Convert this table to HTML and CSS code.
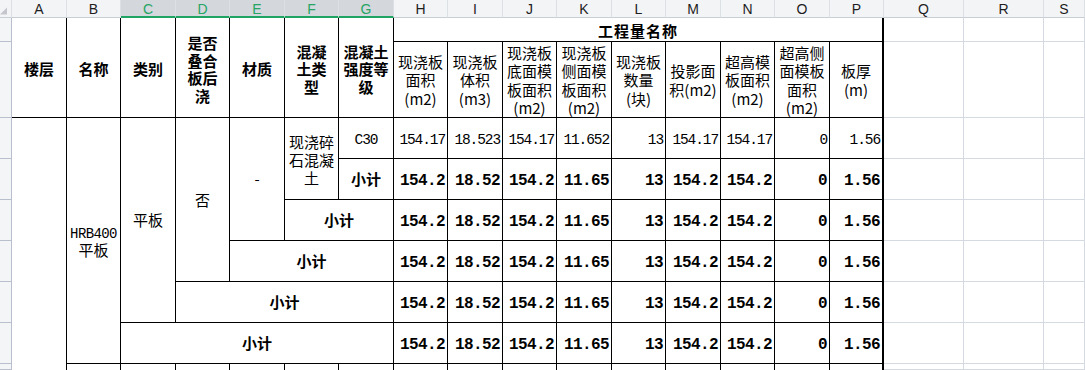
FILE: index.html
```html
<!DOCTYPE html>
<html lang="zh-CN">
<head>
<meta charset="utf-8">
<title>工程量表</title>
<link rel="stylesheet" href="styles.css">
</head>
<body>
<div class="sheet">
  <!-- column headers -->
  <div class="ch corner"><svg class="tri" width="8" height="8" viewBox="0 0 8 8"><polygon points="8,0 8,8 0,8" fill="#c3c7cd"/></svg></div>
  <div class="ch">A</div>
  <div class="ch">B</div>
  <div class="ch sel">C</div>
  <div class="ch sel">D</div>
  <div class="ch sel">E</div>
  <div class="ch sel">F</div>
  <div class="ch sel">G</div>
  <div class="ch">H</div>
  <div class="ch">I</div>
  <div class="ch">J</div>
  <div class="ch">K</div>
  <div class="ch">L</div>
  <div class="ch">M</div>
  <div class="ch">N</div>
  <div class="ch">O</div>
  <div class="ch">P</div>
  <div class="ch">Q</div>
  <div class="ch">R</div>
  <div class="ch">S</div>

  <!-- row 1 -->
  <div class="rh"></div>
  <div class="c hd r2"><span class="t">楼层</span></div>
  <div class="c hd r2"><span class="t">名称</span></div>
  <div class="c hd r2"><span class="t">类别</span></div>
  <div class="c hd r2"><span class="t">是否<br>叠合<br>板后<br>浇</span></div>
  <div class="c hd r2"><span class="t">材质</span></div>
  <div class="c hd r2"><span class="t">混凝<br>土类<br>型</span></div>
  <div class="c hd r2"><span class="t">混凝土<br>强度等<br>级</span></div>
  <div class="c title c9 p"><span class="t">工程量名称</span></div>
  <div class="e"></div><div class="e"></div><div class="e"></div>

  <!-- row 2 -->
  <div class="rh"></div>
  <div class="c sh"><span class="t">现浇板<br>面积<br>(m2)</span></div>
  <div class="c sh"><span class="t">现浇板<br>体积<br>(m3)</span></div>
  <div class="c sh"><span class="t">现浇板<br>底面模<br>板面积<br>(m2)</span></div>
  <div class="c sh"><span class="t">现浇板<br>侧面模<br>板面积<br>(m2)</span></div>
  <div class="c sh"><span class="t">现浇板<br>数量<br>(块)</span></div>
  <div class="c sh"><span class="t">投影面<br>积(m2)</span></div>
  <div class="c sh"><span class="t">超高模<br>板面积<br>(m2)</span></div>
  <div class="c sh"><span class="t">超高侧<br>面模板<br>面积<br>(m2)</span></div>
  <div class="c sh p"><span class="t">板厚<br>(m)</span></div>
  <div class="e"></div><div class="e"></div><div class="e"></div>

  <!-- row 3 -->
  <div class="rh"></div>
  <div class="c r7 nb"></div>
  <div class="c r6 name"><span class="t"><span class="mono">HRB400</span><br>平板</span></div>
  <div class="c r5"><span class="t">平板</span></div>
  <div class="c r4"><span class="t">否</span></div>
  <div class="c r3"><span class="t">-</span></div>
  <div class="c r2 wrap"><span class="t">现浇碎<br>石混凝<br>土</span></div>
  <div class="c"><span class="t mono">C30</span></div>
  <div class="c n">154.17</div>
  <div class="c n">18.523</div>
  <div class="c n">154.17</div>
  <div class="c n">11.652</div>
  <div class="c n">13</div>
  <div class="c n">154.17</div>
  <div class="c n">154.17</div>
  <div class="c n">0</div>
  <div class="c n p">1.56</div>
  <div class="e"></div><div class="e"></div><div class="e"></div>

  <!-- row 4 -->
  <div class="rh"></div>
  <div class="c b"><span class="t">小计</span></div>
  <div class="c n b">154.2</div>
  <div class="c n b">18.52</div>
  <div class="c n b">154.2</div>
  <div class="c n b">11.65</div>
  <div class="c n b">13</div>
  <div class="c n b">154.2</div>
  <div class="c n b">154.2</div>
  <div class="c n b">0</div>
  <div class="c n b p">1.56</div>
  <div class="e"></div><div class="e"></div><div class="e"></div>

  <!-- row 5 -->
  <div class="rh"></div>
  <div class="c b c2"><span class="t">小计</span></div>
  <div class="c n b">154.2</div>
  <div class="c n b">18.52</div>
  <div class="c n b">154.2</div>
  <div class="c n b">11.65</div>
  <div class="c n b">13</div>
  <div class="c n b">154.2</div>
  <div class="c n b">154.2</div>
  <div class="c n b">0</div>
  <div class="c n b p">1.56</div>
  <div class="e"></div><div class="e"></div><div class="e"></div>

  <!-- row 6 -->
  <div class="rh"></div>
  <div class="c b c3"><span class="t">小计</span></div>
  <div class="c n b">154.2</div>
  <div class="c n b">18.52</div>
  <div class="c n b">154.2</div>
  <div class="c n b">11.65</div>
  <div class="c n b">13</div>
  <div class="c n b">154.2</div>
  <div class="c n b">154.2</div>
  <div class="c n b">0</div>
  <div class="c n b p">1.56</div>
  <div class="e"></div><div class="e"></div><div class="e"></div>

  <!-- row 7 -->
  <div class="rh"></div>
  <div class="c b c4"><span class="t">小计</span></div>
  <div class="c n b">154.2</div>
  <div class="c n b">18.52</div>
  <div class="c n b">154.2</div>
  <div class="c n b">11.65</div>
  <div class="c n b">13</div>
  <div class="c n b">154.2</div>
  <div class="c n b">154.2</div>
  <div class="c n b">0</div>
  <div class="c n b p">1.56</div>
  <div class="e"></div><div class="e"></div><div class="e"></div>

  <!-- row 8 -->
  <div class="rh"></div>
  <div class="c b c5"><span class="t">小计</span></div>
  <div class="c n b">154.2</div>
  <div class="c n b">18.52</div>
  <div class="c n b">154.2</div>
  <div class="c n b">11.65</div>
  <div class="c n b">13</div>
  <div class="c n b">154.2</div>
  <div class="c n b">154.2</div>
  <div class="c n b">0</div>
  <div class="c n b p">1.56</div>
  <div class="e"></div><div class="e"></div><div class="e"></div>

  <!-- row 9 -->
  <div class="rh"></div>
  <div class="c nb"></div>
  <div class="c nb"></div>
  <div class="c nb"></div>
  <div class="c nb"></div>
  <div class="c nb"></div>
  <div class="c nb"></div>
  <div class="c nb"></div>
  <div class="c nb"></div>
  <div class="c nb"></div>
  <div class="c nb"></div>
  <div class="c nb"></div>
  <div class="c nb"></div>
  <div class="c nb"></div>
  <div class="c nb"></div>
  <div class="c nb p"></div>
  <div class="e"></div><div class="e"></div><div class="e"></div>
</div>
</body>
</html>
```

FILE: styles.css
```css
* {
  box-sizing: border-box;
}

html,
body {
  margin: 0;
  padding: 0;
  background: #ffffff;
  overflow: hidden;
}

body {
  width: 1085px;
  height: 370px;
  font-family: "Noto Sans CJK SC", sans-serif;
  font-size: 15px;
  color: #000000;
}

.sheet {
  display: grid;
  grid-template-columns: 12px repeat(8, 55px 54px) 80px 80px 1fr;
  grid-template-rows: 18px 24px 76px repeat(6, 41px) 1fr;
  height: 370px;
}

/* column header strip */
.ch {
  background: #f3f4f6;
  border-right: 1px solid #dcdfe4;
  border-bottom: 1px solid #c9cdd4;
  font-family: "Liberation Sans", sans-serif;
  font-size: 14px;
  color: #1e1e1e;
  display: flex;
  align-items: center;
  justify-content: center;
  line-height: 1;
  padding-top: 1px;
}

.ch.sel {
  background: #d4d7dc;
  color: #25a564;
  border-bottom: 2px solid #1fa463;
}

.corner {
  justify-content: flex-end;
  align-items: flex-end;
  padding: 0 4px 2px 0;
}

.tri {
  display: block;
}

/* row header strip */
.rh {
  background: #f4f5f7;
  border-right: 1px solid #b9bfcc;
  border-bottom: 1px solid #b9bfcc;
}

/* table cells */
.c {
  border-right: 1px solid #000000;
  border-bottom: 1px solid #000000;
  display: flex;
  align-items: center;
  justify-content: center;
  text-align: center;
  line-height: 18px;
  white-space: nowrap;
}

.t {
  display: block;
}

.hd {
  font-weight: 700;
  line-height: 17.5px;
  padding-top: 3px;
}

.title {
  font-weight: 700;
  letter-spacing: 1px;
  padding-top: 3px;
}

.sh {
  line-height: 18.5px;
  padding-top: 2px;
}

.wrap {
  line-height: 18px;
  padding-top: 2px;
}

.name {
  line-height: 16px;
}

.b {
  font-weight: 700;
}

.mono {
  font-family: "Liberation Mono", monospace;
  font-size: 14px;
  letter-spacing: -0.6px;
}

.t.mono {
  font-size: 14.5px;
  letter-spacing: -1px;
  padding-top: 3px;
}

.n {
  justify-content: flex-end;
  padding-right: 2px;
  padding-top: 3px;
  font-family: "Liberation Mono", monospace;
  font-size: 14.5px;
  letter-spacing: -1.1px;
}

.n.b {
  font-size: 16px;
  letter-spacing: -0.6px;
}

.p {
  border-right-width: 2px;
}

.nb {
  border-bottom: none;
}

.e {
  border-right: 1px solid #d5d9e1;
  border-bottom: 1px solid #d5d9e1;
}

/* merged cells */
.r2 { grid-row: span 2; }
.r3 { grid-row: span 3; }
.r4 { grid-row: span 4; }
.r5 { grid-row: span 5; }
.r6 { grid-row: span 6; }
.r7 { grid-row: span 7; }

.c2 { grid-column: span 2; }
.c3 { grid-column: span 3; }
.c4 { grid-column: span 4; }
.c5 { grid-column: span 5; }
.c9 { grid-column: span 9; }
```
